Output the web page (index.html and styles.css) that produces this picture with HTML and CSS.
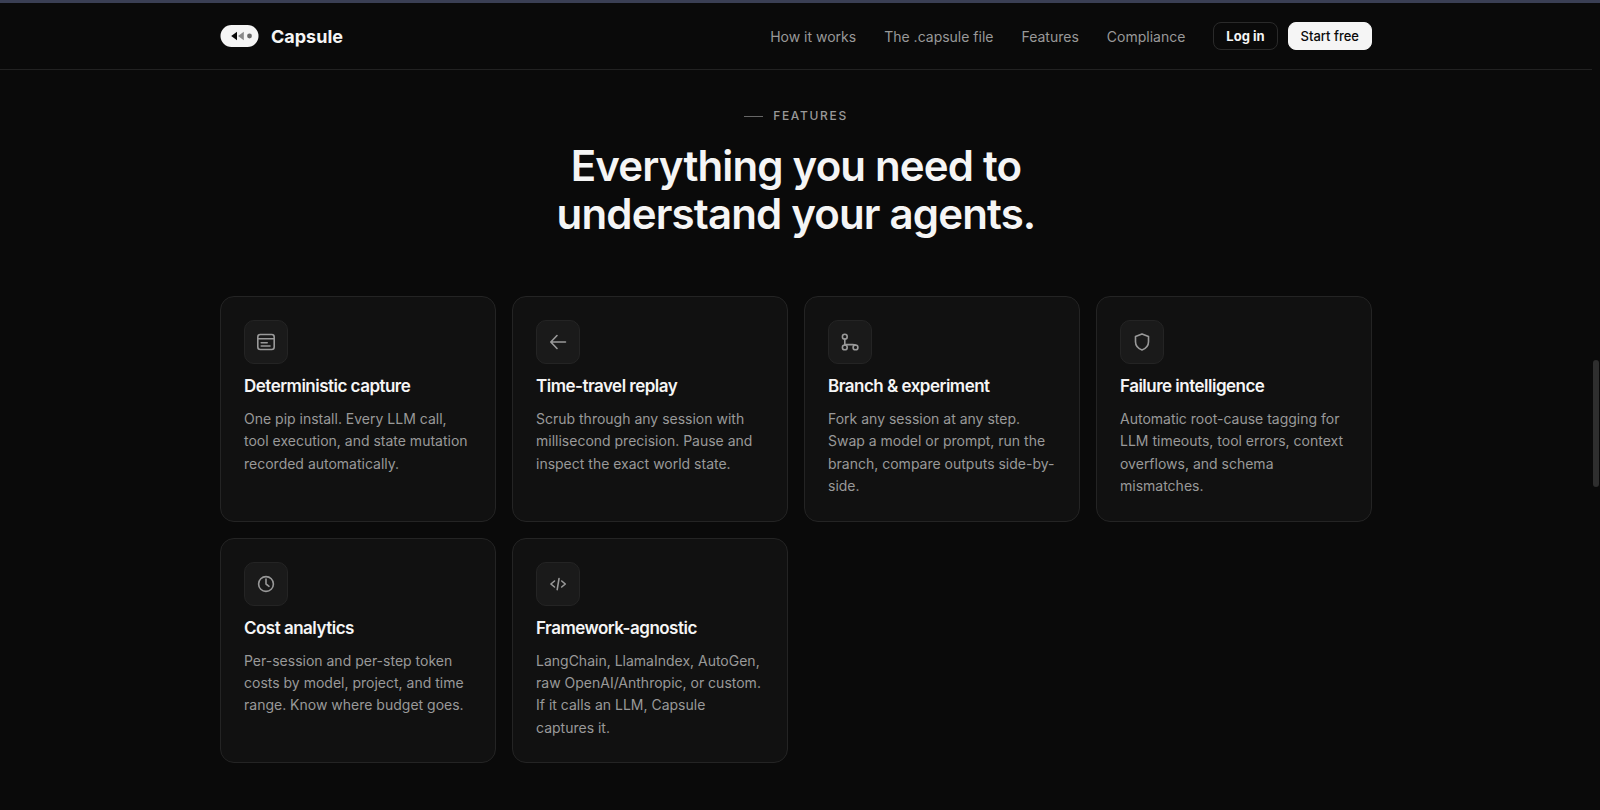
FILE: index.html
```html
<!DOCTYPE html>
<html lang="en">
<head>
    <meta charset="UTF-8">
    <meta name="viewport" content="width=device-width, initial-scale=1.0">
    <title>Capsule</title>
    <link rel="stylesheet" href="styles.css">
</head>
<body>
    <header class="nav">
        <div class="container nav-inner">
            <a class="brand" href="#">
                <svg class="brand-mark" viewBox="0 0 38 22" aria-hidden="true">
                    <rect width="38" height="22" rx="11" fill="#f5f5f5"/>
                    <path d="M16.500 6.800v8.400L10.700 11z" fill="#0a0a0a"/>
                    <path d="M23.300 6.800v8.400L17.500 11z" fill="#8a8a8a"/>
                    <circle cx="29" cy="11" r="2.400" fill="#6a6a6a"/>
                </svg>
                <span>Capsule</span>
            </a>
            <nav class="nav-links">
                <a href="#how">How it works</a>
                <a href="#file">The .capsule file</a>
                <a href="#features">Features</a>
                <a href="#compliance">Compliance</a>
            </nav>
            <div class="nav-actions">
                <button class="btn btn-ghost" type="button">Log in</button>
                <button class="btn btn-solid" type="button">Start free</button>
            </div>
        </div>
    </header>

    <main class="container features" id="features">
        <p class="eyebrow">Features</p>
        <h1>Everything you need to<br>understand your agents.</h1>

        <div class="grid">
            <article class="card">
                <div class="icon">
                    <svg viewBox="0 0 20 20">
                        <rect x="1.800" y="2.500" width="16.400" height="15" rx="2.500"/>
                        <path d="M2 6.800h16M5.200 10.800h6M5.200 14h8.800"/>
                    </svg>
                </div>
                <h2>Deterministic capture</h2>
                <p>One pip install. Every LLM call, tool execution, and state mutation recorded automatically.</p>
            </article>
            <article class="card">
                <div class="icon">
                    <svg viewBox="0 0 20 20">
                        <path d="M17.500 10H3M9 3.500L2.800 10 9 16.500"/>
                    </svg>
                </div>
                <h2>Time-travel replay</h2>
                <p>Scrub through any session with millisecond precision. Pause and inspect the exact world state.</p>
            </article>
            <article class="card">
                <div class="icon">
                    <svg viewBox="0 0 20 20">
                        <circle cx="4.800" cy="4.700" r="2.400"/>
                        <circle cx="4.800" cy="15.400" r="2.400"/>
                        <circle cx="15.500" cy="15.400" r="2.400"/>
                        <path d="M4.800 7.100V13M5.300 12.600h7.200c1.500 0 2.500.2 3 .6"/>
                    </svg>
                </div>
                <h2>Branch &amp; experiment</h2>
                <p>Fork any session at any step. Swap a model or prompt, run the branch, compare outputs side-by-side.</p>
            </article>
            <article class="card">
                <div class="icon">
                    <svg viewBox="0 0 20 20">
                        <path d="M10 1.900l6.500 2.600v5.300c0 4-2.500 6.700-6.500 8.200-4-1.500-6.500-4.200-6.500-8.200V4.500z"/>
                    </svg>
                </div>
                <h2>Failure intelligence</h2>
                <p>Automatic root-cause tagging for LLM timeouts, tool errors, context overflows, and schema mismatches.</p>
            </article>
            <article class="card">
                <div class="icon">
                    <svg viewBox="0 0 20 20">
                        <circle cx="10" cy="10" r="7.400"/>
                        <path d="M10 5v5l3 2.300"/>
                    </svg>
                </div>
                <h2>Cost analytics</h2>
                <p>Per-session and per-step token costs by model, project, and time range. Know where budget goes.</p>
            </article>
            <article class="card">
                <div class="icon">
                    <svg viewBox="0 0 20 20">
                        <path d="M6.500 7L2.900 10l3.600 3M13.700 7l3.600 3-3.600 3M11 4.600L9.200 15.600"/>
                    </svg>
                </div>
                <h2>Framework-agnostic</h2>
                <p>LangChain, LlamaIndex, AutoGen, raw OpenAI/Anthropic, or custom. If it calls an LLM, Capsule captures it.</p>
            </article>
        </div>
    </main>

    <div class="scroll-thumb" aria-hidden="true"></div>
</body>
</html>
```

FILE: styles.css
```css
* {
    box-sizing: border-box;
    margin: 0;
    padding: 0;
}
body {
    min-height: 100vh;
    padding-right: 8px;
    border-top: 3px solid #3a3f54;
    background: #0a0a0a;
    color: #f5f5f5;
    font-family: Inter, "Liberation Sans", sans-serif;
}
a {
    color: inherit;
    text-decoration: none;
}
.container {
    max-width: 1200px;
    margin: 0 auto;
    padding: 0 24px;
}

/* top bar */
.nav {
    border-bottom: 1px solid #222;
}
.nav-inner {
    display: flex;
    align-items: center;
    height: 66px;
}
.brand {
    display: flex;
    align-items: center;
    gap: 12px;
    margin-right: auto;
    font-size: 18px;
    font-weight: 700;
}
.brand-mark {
    width: 39px;
    height: 22px;
}
.nav-links {
    display: flex;
    gap: 28px;
    margin-right: 28px;
    color: #999;
    font-size: 14px;
}
.nav-actions {
    display: flex;
    gap: 10px;
}
.btn {
    height: 28px;
    padding: 0 12px;
    border: 1px solid #2a2a2a;
    border-radius: 8px;
    font-family: inherit;
    font-size: 13px;
}
.btn-ghost {
    background: transparent;
    color: #f5f5f5;
    font-weight: 700;
}
.btn-solid {
    border-color: #f5f5f5;
    background: #f5f5f5;
    color: #0a0a0a;
    font-weight: 500;
}

/* features */
.features {
    padding-top: 36px;
    padding-bottom: 44px;
}
.eyebrow {
    display: flex;
    align-items: center;
    justify-content: center;
    gap: 10px;
    margin-bottom: 16px;
    color: #999;
    font-size: 12px;
    font-weight: 500;
    line-height: 20px;
    letter-spacing: 0.14em;
    text-transform: uppercase;
}
.eyebrow::before {
    content: "";
    width: 19px;
    height: 1px;
    background: #666;
}
h1 {
    margin-bottom: 58px;
    font-size: 42px;
    font-weight: 600;
    line-height: 48px;
    letter-spacing: -0.02em;
    text-align: center;
}
.grid {
    display: grid;
    grid-template-columns: repeat(4, 1fr);
    gap: 16px;
}
.card {
    padding: 23px;
    border: 1px solid #242424;
    border-radius: 14px;
    background: #111;
}
.icon {
    display: flex;
    align-items: center;
    justify-content: center;
    width: 44px;
    height: 44px;
    margin-bottom: 10px;
    border: 1px solid #242424;
    border-radius: 10px;
    background: #1a1a1a;
}
.icon svg {
    width: 20px;
    height: 20px;
    fill: none;
    stroke: #999;
    stroke-width: 1.6;
    stroke-linecap: round;
    stroke-linejoin: round;
}
h2 {
    margin-bottom: 10px;
    font-size: 17px;
    font-weight: 600;
    line-height: 24px;
    letter-spacing: -0.03em;
}
.card p {
    color: #999;
    font-size: 14px;
    line-height: 1.6;
}

/* scrollbar */
.scroll-thumb {
    position: fixed;
    top: 360px;
    right: 1px;
    width: 6px;
    height: 127px;
    border-radius: 3px;
    background: #2e2e2e;
}
```
